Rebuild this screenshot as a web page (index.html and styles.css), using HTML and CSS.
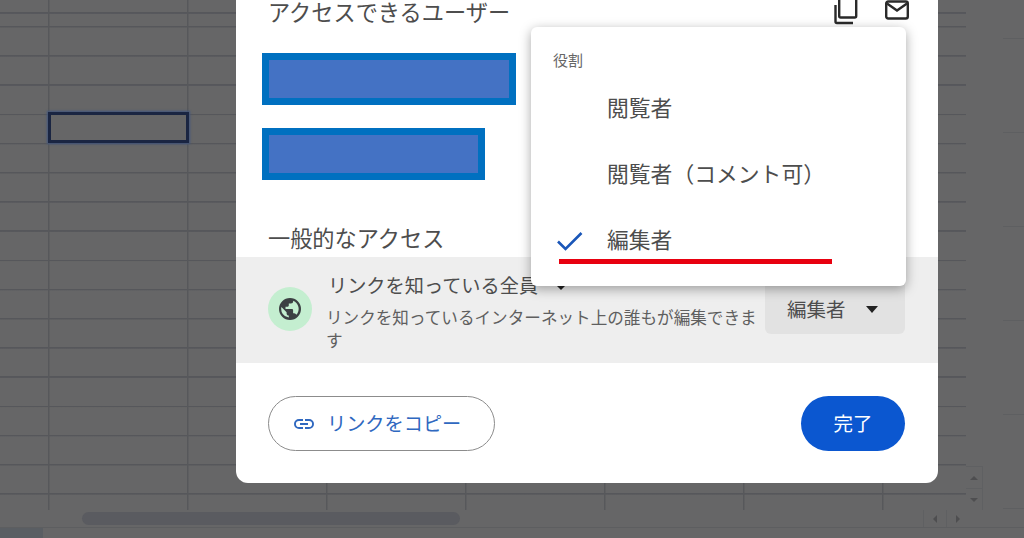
FILE: index.html
```html
<!DOCTYPE html>
<html lang="ja">
  <head>
    <meta charset="utf-8">
    <title>共有</title>
    <link rel="stylesheet" href="styles.css">
  </head>
  <body>
    <div class="sheet">
      <div class="sheet-main">
        <div class="cells">
          <div class="selected"></div>
          <div class="vbtns">
            <span class="vbtn"><span class="arrow up"></span></span>
            <span class="vbtn"><span class="arrow down"></span></span>
          </div>
        </div>
        <div class="gutter"></div>
      </div>
      <div class="hbar">
        <div class="thumb"></div>
        <div class="hbtns">
          <span class="hbtn"><span class="arrow left"></span></span>
          <span class="hbtn"><span class="arrow right"></span></span>
        </div>
      </div>
      <div class="tabs"><div class="tab"></div></div>
    </div>

    <div class="dialog">
      <div class="head">
        <span class="title">アクセスできるユーザー</span>
        <div class="head-icons">
          <svg width="24" height="25" viewBox="0 0 24 25" fill="none" stroke="#2a2a2a" stroke-width="2.4">
            <rect x="5.200" y="-4" width="17" height="21.500" rx="1.500"/>
            <path d="M1.500 5v16.500a1.500 1.500 0 0 0 1.500 1.500H19"/>
          </svg>
          <svg width="24" height="20" viewBox="0 0 24 20" fill="none" stroke="#2a2a2a" stroke-width="2.4">
            <rect x="1.200" y="1.500" width="21.600" height="17" rx="2"/>
            <path d="M2 3.500l10 7 10-7"/>
          </svg>
        </div>
      </div>
      <div class="people">
        <div class="mask wide"></div>
        <div class="mask narrow"></div>
      </div>
      <div class="title general">一般的なアクセス</div>
      <div class="band">
        <div class="globe">
          <svg width="24" height="24" viewBox="0 0 24 24" fill="#3c4043">
            <path d="M12 1a11 11 0 1 0 0 22 11 11 0 0 0 0-22zm-1.200 19.600A8.800 8.800 0 0 1 3.400 10l5.200 5.200v1.200c0 1.200 1 2.200 2.200 2.200zm7.500-2.800a2.200 2.200 0 0 0-2.100-1.500h-1.100v-3.300a1.100 1.100 0 0 0-1.100-1.100H7.500V9.700h2.200a1.100 1.100 0 0 0 1.100-1.100V6.400H13a2.200 2.200 0 0 0 2.200-2.200v-.5a8.800 8.800 0 0 1 3.100 14.100z"/>
          </svg>
        </div>
        <div class="access">
          <div class="access-name">リンクを知っている全員<span class="caret small"></span></div>
          <div class="access-desc">リンクを知っているインターネット上の誰もが編集できます</div>
        </div>
        <div class="role-btn"><span class="role-text">編集者</span><span class="caret"></span></div>
      </div>
      <div class="foot">
        <div class="copy-btn">
          <svg width="24" height="24" viewBox="0 0 24 24" fill="#2f68c0">
            <path d="M3.900 12a3.100 3.100 0 0 1 3.100-3.100h4V7H7a5 5 0 0 0 0 10h4v-1.900H7A3.100 3.100 0 0 1 3.900 12zM8 13h8v-2H8zm9-6h-4v1.900h4a3.100 3.100 0 0 1 0 6.200h-4V17h4a5 5 0 0 0 0-10z"/>
          </svg>
          <span class="copy-text">リンクをコピー</span>
        </div>
        <div class="done-btn"><span class="done-text">完了</span></div>
      </div>

      <div class="menu">
        <div class="menu-label">役割</div>
        <div class="menu-item">閲覧者</div>
        <div class="menu-item">閲覧者（コメント可）</div>
        <div class="menu-item">
          <svg class="check" width="28" height="20" viewBox="0 0 28 20" fill="none" stroke="#1a56b8" stroke-width="2.600">
            <path d="M2 10.500l7.500 7.500L25.500 2"/>
          </svg>
          編集者
        </div>
        <div class="red-line"></div>
      </div>
    </div>
  </body>
</html>
```

FILE: styles.css
```css
html, body {
    margin: 0;
    height: 538px;
    overflow: hidden;
}
body {
    font-family: "Noto Sans CJK JP", "Noto Sans", sans-serif;
    background-color: #666667;
    position: relative;
}

/* dimmed spreadsheet behind the dialog */
.sheet {
    display: flex;
    flex-direction: column;
    height: 538px;
}
.sheet-main {
    display: flex;
    height: 510px;
}
.cells {
    position: relative;
    width: 966px;
    height: 510px;
    background-image:
        repeating-linear-gradient(to right, #57585b 0, #57585b 1px, transparent 2px, transparent 139px),
        repeating-linear-gradient(to bottom, #56575b 0, #56575b 1px, transparent 2px, transparent 29.200px);
    background-position: 48px 0, 0 26px;
}
.gutter {
    width: 21px;
    margin-left: 37px;
    background-image: repeating-linear-gradient(to bottom, #5e5f61 0, #5e5f61 1px, transparent 1px, transparent 94px);
    background-position: 0 38px;
}
.selected {
    position: absolute;
    left: 48px;
    top: 112px;
    width: 135px;
    height: 25px;
    border: 3px solid #1a2542;
    box-shadow: 0 0 2px 1px #41567e;
}
.vbtns {
    position: absolute;
    left: 966px;
    top: 466px;
    width: 16px;
    height: 44px;
    display: flex;
    flex-direction: column;
    background-color: #666667;
    border-right: 1px solid #5f6062;
}
.vbtn {
    flex: 1;
    display: flex;
    align-items: center;
    justify-content: center;
    border-top: 1px solid #5f6062;
}
.hbar {
    height: 18px;
    display: flex;
    align-items: center;
    border-bottom: 1px solid #5d5e60;
    box-sizing: border-box;
}
.thumb {
    width: 378px;
    height: 13px;
    margin-left: 82px;
    border-radius: 7px;
    background-color: #5a5b60;
}
.hbtns {
    margin-left: 463px;
    display: flex;
    height: 17px;
}
.hbtn {
    width: 22px;
    display: flex;
    align-items: center;
    justify-content: center;
    border-left: 1px solid #5f6062;
}
.tabs {
    height: 10px;
}
.tab {
    width: 43px;
    height: 10px;
    background-color: #5a5e63;
}
.arrow {
    width: 0;
    height: 0;
    border: 4px solid transparent;
}
.arrow.up { border-bottom-color: #4e4e50; border-top-width: 0; }
.arrow.down { border-top-color: #4e4e50; border-bottom-width: 0; }
.arrow.left { border-right-color: #4e4e50; border-left-width: 0; }
.arrow.right { border-left-color: #4e4e50; border-right-width: 0; }

/* share dialog */
.dialog {
    position: absolute;
    left: 236px;
    top: 0;
    width: 702px;
    height: 483px;
    background-color: #fff;
    border-radius: 0 0 12px 12px;
    overflow: hidden;
    color: #4d4d4d;
}
.head {
    display: flex;
    justify-content: space-between;
    height: 24px;
    padding: 0 29px 0 32px;
}
.title {
    font-size: 22.200px;
    line-height: 22px;
    white-space: nowrap;
}
.head-icons {
    display: flex;
    gap: 27px;
    align-items: flex-start;
}
.people {
    display: flex;
    flex-direction: column;
    gap: 23px;
    padding: 29px 0 0 26px;
}
.mask {
    height: 52px;
    box-sizing: border-box;
    border: 7px solid #0070c0;
    background-color: #4472c4;
}
.mask.wide { width: 254px; }
.mask.narrow { width: 223px; }
.general {
    margin: 46px 0 0 32px;
}
.band {
    margin-top: 9px;
    height: 106px;
    background-color: #eeeeee;
    display: flex;
    padding: 0 33px 0 32px;
    box-sizing: border-box;
}
.globe {
    flex: none;
    width: 44px;
    height: 44px;
    margin-top: 30px;
    border-radius: 50%;
    background-color: #c4eed0;
    display: flex;
    align-items: center;
    justify-content: center;
}
.access {
    width: 436px;
    margin-left: 15px;
    flex: none;
}
.access-name {
    font-size: 19.200px;
    line-height: 24px;
    margin: 16px 0 0 1px;
    white-space: nowrap;
}
.access-desc {
    font-size: 16.600px;
    line-height: 23px;
    margin: 9px 0 0 -1px;
    color: #5f5f5f;
}
.role-btn {
    flex: none;
    width: 140px;
    height: 50px;
    margin: 27px 0 0 auto;
    padding-left: 22px;
    box-sizing: border-box;
    background-color: #e2e2e2;
    border-radius: 0 0 6px 6px;
    display: flex;
    align-items: center;
    font-size: 19.500px;
}
.role-text {
    position: relative;
    top: -1px;
}
.caret {
    width: 0;
    height: 0;
    margin-left: 20px;
    border-style: solid;
    border-width: 7px 6.500px 0;
    border-color: #222 transparent transparent;
}
.caret.small {
    display: inline-block;
    margin-left: 19px;
    border-width: 4px 4.500px 0;
    vertical-align: middle;
}
.foot {
    display: flex;
    justify-content: space-between;
    padding: 33px 33px 0 32px;
}
.copy-btn {
    width: 227px;
    height: 55px;
    box-sizing: border-box;
    border: 1px solid #8c8c8c;
    border-radius: 28px;
    display: flex;
    align-items: center;
    gap: 11px;
    padding-left: 23px;
    color: #2f68c0;
    font-size: 19.200px;
}
.copy-text, .done-text {
    position: relative;
    top: -1px;
}
.done-btn {
    width: 104px;
    height: 55px;
    border-radius: 28px;
    background-color: #0b57d0;
    color: #fff;
    font-size: 19.500px;
    display: flex;
    align-items: center;
    justify-content: center;
}

/* role menu, opened over the dialog */
.menu {
    position: absolute;
    left: 295px;
    top: 27px;
    width: 375px;
    height: 259px;
    background-color: #fff;
    border-radius: 6px;
    box-shadow: 0 3px 12px rgba(0,0,0,.35);
    padding: 23px 0 0 22px;
    box-sizing: border-box;
}
.menu-label {
    font-size: 15px;
    line-height: 20px;
    color: #666;
}
.menu-item {
    position: relative;
    font-size: 21.800px;
    line-height: 66px;
    padding-left: 54px;
    white-space: nowrap;
}
.menu-label + .menu-item {
    margin-top: 4px;
}
.check {
    position: absolute;
    left: 3px;
    top: 25px;
}
.red-line {
    width: 273px;
    height: 5px;
    margin: -13px 0 0 6px;
    position: relative;
    background-color: #e8000f;
}
```
